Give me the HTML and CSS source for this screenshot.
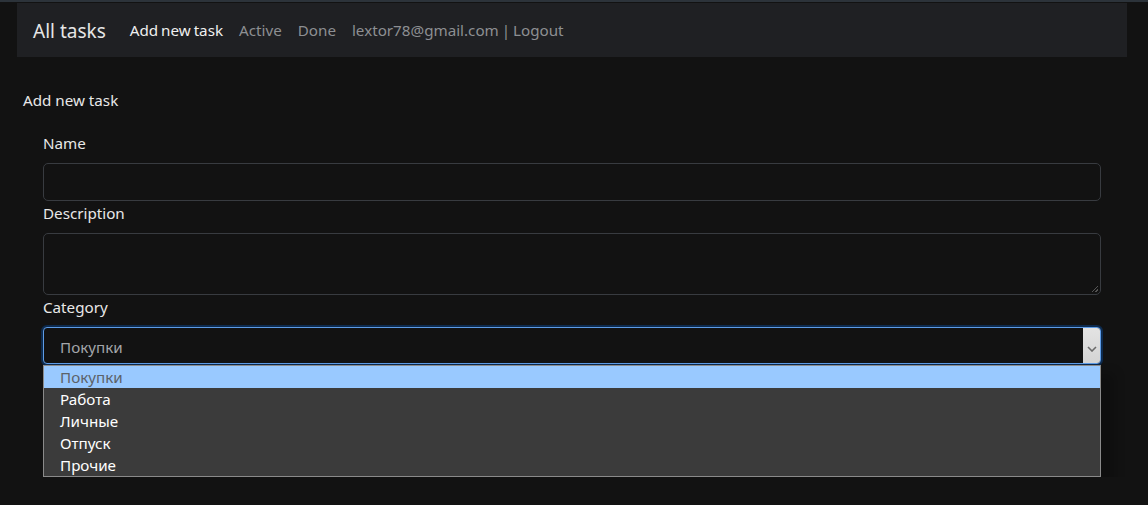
FILE: index.html
```html
<!DOCTYPE html>
<html lang="en">
<head>
<meta charset="utf-8">
<title>Add new task</title>
<link rel="stylesheet" href="styles.css">
</head>
<body>
<div class="topline"></div>
<nav class="navbar">
  <a class="brand" href="#">All tasks</a>
  <ul class="nav">
    <li><a class="nav-link active" href="#">Add new task</a></li>
    <li><a class="nav-link" href="#">Active</a></li>
    <li><a class="nav-link" href="#">Done</a></li>
    <li><a class="nav-link" href="#">lextor78@gmail.com | Logout</a></li>
  </ul>
</nav>
<main class="page">
  <h1 class="title">Add new task</h1>
  <div class="form">
    <div class="label">Name</div>
    <div class="input"></div>
    <div class="label">Description</div>
    <div class="textarea"><span class="grip"></span></div>
    <div class="label">Category</div>
    <div class="select">
      <span class="select-value">Покупки</span>
      <span class="select-btn">
        <svg width="10" height="6" viewBox="0 0 10 6"><path d="M1 1 L5 5 L9 1" fill="none" stroke="#6b6b6b" stroke-width="1.6"/></svg>
      </span>
    </div>
    <div class="dropdown">
      <div class="option selected">Покупки</div>
      <div class="option">Работа</div>
      <div class="option">Личные</div>
      <div class="option">Отпуск</div>
      <div class="option">Прочие</div>
    </div>
  </div>
</main>
</body>
</html>
```
FILE: styles.css
```css
html, body {
  margin: 0;
  padding: 0;
  background: #121212;
  color: #dee2e6;
  font-family: "Noto Sans", "Open Sans", sans-serif;
  font-size: 15.2px;
  line-height: 24px;
}
.topline {
  height: 2px;
  background: #2c333a;
}
.navbar {
  margin: 1px 21px 0 17px;
  height: 54px;
  background: #1f2023;
  display: flex;
  align-items: center;
  padding: 0 16px;
  box-sizing: border-box;
}
.brand {
  font-size: 19px;
  color: #e6e6e6;
  text-decoration: none;
  margin-right: 24px;
  line-height: 30px;
  position: relative;
  top: 1px;
}
.nav {
  display: flex;
  list-style: none;
  margin: 0;
  padding: 0;
}
.nav-link {
  display: block;
  padding: 8px 8px;
  color: #8d8f92;
  text-decoration: none;
  word-spacing: -1px;
}
.nav li:first-child .nav-link { padding-left: 0; }
.nav-link.active { color: #f0f0f0; }
.page {
  padding: 31px 47px 0 23px;
}
.title {
  font-size: 15.2px;
  font-weight: normal;
  margin: 0 0 19px 0;
  color: #e8e8e8;
}
.form {
  display: flex;
  flex-direction: column;
  padding-left: 20px;
}
.label {
  margin-bottom: 8px;
  color: #e8e8e8;
}
.input {
  height: 38px;
  box-sizing: border-box;
  border: 1px solid #383b40;
  border-radius: 5px;
  background: #121212;
}
.textarea {
  position: relative;
  height: 62px;
  box-sizing: border-box;
  border: 1px solid #383b40;
  border-radius: 5px;
  background: #121212;
}
.grip {
  position: absolute;
  right: 2px;
  bottom: 2px;
  width: 6px;
  height: 6px;
  background: linear-gradient(135deg, transparent 45%, #555 45%, #555 55%, transparent 55%, transparent 75%, #555 75%, #555 85%, transparent 85%);
}
.select {
  height: 37px;
  box-sizing: border-box;
  border: 1px solid #5d9be6;
  border-radius: 4px;
  box-shadow: 0 0 0 2px #0d2a4d;
  background: #121212;
  display: flex;
  align-items: stretch;
  overflow: hidden;
}
.select-value {
  flex: 1;
  padding-left: 16px;
  line-height: 38px;
  color: #a3a6aa;
}
.select-btn {
  width: 17px;
  background: linear-gradient(#e3e3e3, #d4d4d4);
  display: flex;
  align-items: center;
  justify-content: center;
  padding-top: 6px;
  box-sizing: border-box;
}
.dropdown {
  margin-top: 1px;
  background: #3b3b3b;
  border: 1px solid #8a8a8a;
  box-shadow: 14px 8px 10px rgba(0,0,0,0.2);
}
.option {
  padding-left: 16px;
  height: 22px;
  line-height: 22px;
  color: #ffffff;
}
.option.selected {
  background: #99c9ff;
  color: #5c6268;
}
```
